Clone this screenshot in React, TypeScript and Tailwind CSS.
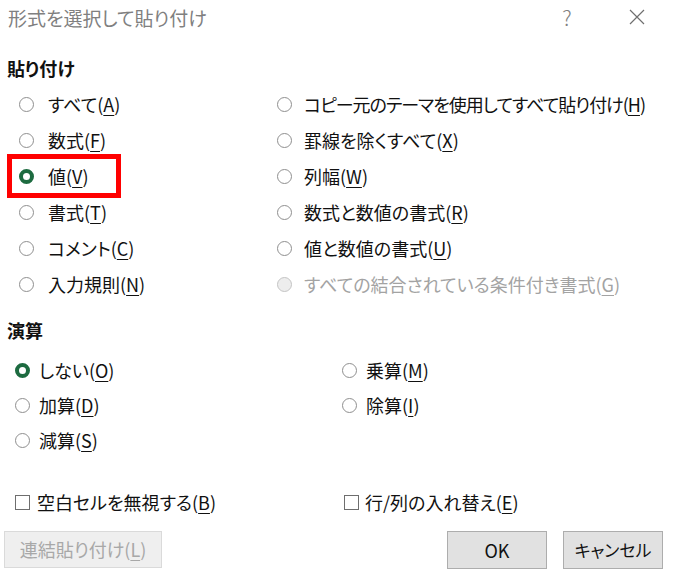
import React from 'react';

type Opt = { label: string; key: string; checked?: boolean; disabled?: boolean; boxed?: boolean; tight?: boolean };

const Radio: React.FC<{ checked?: boolean; disabled?: boolean }> = ({ checked, disabled }) => {
  if (checked) {
    return <span className="inline-block w-[15px] h-[15px] rounded-full border-[4px] border-[#1d6b40] bg-white shrink-0" />;
  }
  if (disabled) {
    return <span className="inline-block w-[15px] h-[15px] rounded-full border border-[#c4c4c4] bg-[#ededed] shrink-0" />;
  }
  return <span className="inline-block w-[15px] h-[15px] rounded-full border border-[#8f8f8f] bg-white shrink-0" />;
};

const Label: React.FC<{ label: string; k: string; className?: string }> = ({ label, k, className }) => (
  <span className={`whitespace-nowrap ${className ?? ''}`}>
    {label}(<u className="underline underline-offset-[3px] decoration-1">{k}</u>)
  </span>
);

const RadioRow: React.FC<{ opt: Opt; h: string; gap: string }> = ({ opt, h, gap }) => (
  <div className={`relative flex items-center ${h} ${gap} ${opt.disabled ? 'text-[#a3a3a3]' : 'text-[#111]'}`}>
    <Radio checked={opt.checked} disabled={opt.disabled} />
    <Label label={opt.label} k={opt.key} className={opt.tight ? 'tracking-[-1px]' : ''} />
    {opt.boxed && (
      <div className="absolute left-[-12px] top-[-4px] w-[114px] h-[44px] border-[5px] border-[#ff0000]" />
    )}
  </div>
);

const pasteLeft: Opt[] = [
  { label: 'すべて', key: 'A' },
  { label: '数式', key: 'F' },
  { label: '値', key: 'V', checked: true, boxed: true },
  { label: '書式', key: 'T' },
  { label: 'コメント', key: 'C' },
  { label: '入力規則', key: 'N' },
];

const pasteRight: Opt[] = [
  { label: 'コピー元のテーマを使用してすべて貼り付け', key: 'H', tight: true },
  { label: '罫線を除くすべて', key: 'X' },
  { label: '列幅', key: 'W' },
  { label: '数式と数値の書式', key: 'R' },
  { label: '値と数値の書式', key: 'U' },
  { label: 'すべての結合されている条件付き書式', key: 'G', disabled: true },
];

const opLeft: Opt[] = [
  { label: 'しない', key: 'O', checked: true },
  { label: '加算', key: 'D' },
  { label: '減算', key: 'S' },
];

const opRight: Opt[] = [
  { label: '乗算', key: 'M' },
  { label: '除算', key: 'I' },
];

export default function App() {
  return (
    <div className="w-[673px] h-[578px] bg-white flex flex-col font-['Noto_Sans_CJK_JP',sans-serif] [font-feature-settings:'palt'] overflow-hidden">
      {/* Title bar */}
      <div className="h-[34px] flex items-center pl-[8px] pr-[28px] text-[#808080]">
        <span className="text-[19px] leading-none">形式を選択して貼り付け</span>
        <span className="ml-auto w-[20px] text-center text-[21px] font-light leading-none">?</span>
        <svg className="ml-[52px]" width="16" height="16" viewBox="0 0 16 16">
          <path d="M1 1 L15 15 M15 1 L1 15" stroke="#6f6f6f" strokeWidth="1.2" fill="none" />
        </svg>
      </div>

      {/* Paste section */}
      <div className="mt-[24px] pl-[7px] text-[18px] leading-[20px] font-bold text-[#111]">貼り付け</div>
      <div className="mt-[8px] pl-[19px] flex text-[18px]">
        <div className="w-[258px] flex flex-col">
          {pasteLeft.map((o) => (
            <RadioRow key={o.key} opt={o} h="h-[36px]" gap="gap-[14px]" />
          ))}
        </div>
        <div className="flex flex-col">
          {pasteRight.map((o) => (
            <RadioRow key={o.key} opt={o} h="h-[36px]" gap="gap-[12px]" />
          ))}
        </div>
      </div>

      {/* Operation section */}
      <div className="mt-[18px] pl-[7px] text-[18px] leading-[20px] font-bold text-[#111]">演算</div>
      <div className="mt-[13px] pl-[15px] flex text-[18px]">
        <div className="w-[327px] flex flex-col">
          {opLeft.map((o) => (
            <RadioRow key={o.key} opt={o} h="h-[35px]" gap="gap-[9px]" />
          ))}
        </div>
        <div className="flex flex-col">
          {opRight.map((o) => (
            <RadioRow key={o.key} opt={o} h="h-[35px]" gap="gap-[9px]" />
          ))}
        </div>
      </div>

      {/* Checkboxes */}
      <div className="mt-[34px] pl-[15px] flex text-[18px] text-[#111]">
        <div className="w-[329px] h-[20px] flex items-center gap-[7px]">
          <span className="w-[15px] h-[15px] border border-[#6e6e6e] bg-white shrink-0" />
          <Label label="空白セルを無視する" k="B" />
        </div>
        <div className="h-[20px] flex items-center gap-[6px]">
          <span className="w-[15px] h-[15px] border border-[#6e6e6e] bg-white shrink-0" />
          <Label label="行/列の入れ替え" k="E" />
        </div>
      </div>

      {/* Buttons */}
      <div className="mt-[19px] flex items-start pl-[4px] pr-[10px]">
        <button className="w-[158px] h-[37px] bg-[#efefef] border border-[#dadada] text-[#a8a8a8] text-[18px]">
          <Label label="連結貼り付け" k="L" />
        </button>
        <button className="ml-auto w-[100px] h-[38px] bg-[#e1e1e1] border border-[#adadad] text-[#111] text-[18px]">OK</button>
        <button className="ml-[16px] w-[100px] h-[38px] bg-[#e1e1e1] border border-[#adadad] text-[#111] text-[17px]">キャンセル</button>
      </div>
    </div>
  );
}
